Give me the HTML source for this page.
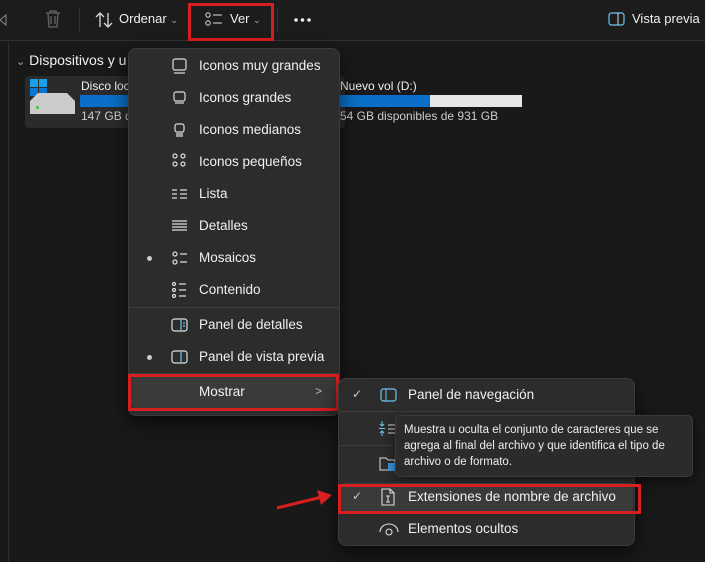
<!DOCTYPE html>
<html><head><meta charset="utf-8"><style>
*{margin:0;padding:0;box-sizing:border-box}
body{width:705px;height:562px;background:#191919;font-family:"Segoe UI","Liberation Sans",sans-serif;color:#fff;position:relative;overflow:hidden;font-size:13px}
.a{position:absolute}
.t{font-size:13.5px;color:#f0f0f0;white-space:nowrap}
.menu{background:#2c2c2c;border:1px solid #3a3a3a;border-radius:8px;box-shadow:0 8px 20px rgba(0,0,0,.6)}
.sep{height:1px;background:#3d3d3d}
.red{border:3px solid #d81e1e}
</style></head><body>
<div class="a" style="left:0;top:0;width:705px;height:41px;background:#1c1c1c;border-bottom:1px solid #333"></div>
<svg class="a" style="left:0;top:8px" width="18" height="22"><path d="M0 12l6-5v10z" stroke="#888" fill="none"/></svg>
<svg class="a" style="left:45px;top:10px" width="16" height="18"><path d="M1 3h14M5 3V1h6v2M3 3l1 14h8l1-14M6 6v8M10 6v8" stroke="#666" fill="none" stroke-width="1.3"/></svg>
<div class="a" style="left:79px;top:8px;width:1px;height:24px;background:#333"></div>
<svg class="a" style="left:95px;top:11px" width="18" height="18"><path d="M5 16V2M1 6l4-4 4 4M13 2v14M9 12l4 4 4-4" stroke="#ddd" fill="none" stroke-width="1.3"/></svg>
<div class="a t" style="left:119px;top:11px;font-size:13px">Ordenar <span style="font-size:9px;color:#aaa">&#8964;</span></div>
<svg class="a" style="left:205px;top:12px" width="18" height="16"><circle cx="3" cy="3" r="2.2" stroke="#ddd" fill="none"/><circle cx="3" cy="11" r="2.2" stroke="#ddd" fill="none"/><path d="M8 3h9M8 11h9" stroke="#ddd"/></svg>
<div class="a t" style="left:230px;top:11px;font-size:13px">Ver <span style="font-size:9px;color:#aaa">&#8964;</span></div>
<div class="a red" style="left:188px;top:3px;width:86px;height:38px"></div>
<div class="a" style="left:277px;top:8px;width:1px;height:24px;background:#333"></div>
<svg class="a" style="left:293px;top:17px" width="20" height="6"><circle cx="3" cy="3" r="1.8" fill="#eee"/><circle cx="9.5" cy="3" r="1.8" fill="#eee"/><circle cx="16" cy="3" r="1.8" fill="#eee"/></svg>
<svg class="a" style="left:608px;top:12px" width="17" height="14"><rect x="1" y="1" width="15" height="12" rx="2.5" stroke="#6cc4f0" fill="none" stroke-width="1.2"/><path d="M10 1v12" stroke="#ddd"/></svg>
<div class="a t" style="left:632px;top:11px;font-size:13px">Vista previa</div>
<div class="a" style="left:8px;top:42px;width:1px;height:520px;background:#2d2d2d"></div>
<div class="a t" style="left:16px;top:52px;font-size:14px"><span style="color:#aaa;font-size:11px">&#8964;</span> Dispositivos y u</div>
<div class="a" style="left:25px;top:76px;width:320px;height:52px;background:#2b2b2b;border-radius:4px"></div>
<svg class="a" style="left:30px;top:79px" width="18" height="18"><rect x="0" y="0" width="8" height="8" fill="#1a9ee8"/><rect x="9" y="0" width="8" height="8" fill="#1a9ee8"/><rect x="0" y="9" width="8" height="8" fill="#0a78d0"/><rect x="9" y="9" width="8" height="8" fill="#0a78d0"/></svg>
<div class="a" style="left:30px;top:93px;width:45px;height:21px;background:#ccc;clip-path:polygon(8px 0,37px 0,45px 8px,45px 21px,0 21px,0 8px)"></div>
<div class="a" style="left:36px;top:106px;width:3px;height:3px;background:#3c3;border-radius:50%"></div>
<div class="a t" style="left:81px;top:79px;font-size:12px">Disco loc</div>
<div class="a" style="left:80px;top:95px;width:60px;height:12px;background:#0a6fc8"></div>
<div class="a t" style="left:81px;top:109px;font-size:12px;color:#ccc">147 GB d</div>
<div class="a t" style="left:340px;top:79px;font-size:12px">Nuevo vol (D:)</div>
<div class="a" style="left:340px;top:95px;width:182px;height:12px;background:#e6e6e6"><div style="width:90px;height:12px;background:#0a6fc8"></div></div>
<div class="a t" style="left:340px;top:109px;font-size:12px;color:#ccc">54 GB disponibles de 931 GB</div>
<div class="a menu" style="left:128px;top:48px;width:212px;height:368px"></div>
<svg class="a" style="left:170px;top:56px" width="20" height="340" fill="none" stroke="#ddd" stroke-width="1.2">
<rect x="3" y="3" width="13" height="11" rx="2"/><path d="M4 17h11"/>
<rect x="4" y="36" width="11" height="9" rx="2"/><path d="M5 47h9"/>
<rect x="5" y="68" width="9" height="8" rx="2"/><path d="M6 78h7M6 80h7"/>
<circle cx="5" cy="100" r="2"/><circle cx="13" cy="100" r="2"/><circle cx="5" cy="108" r="2"/><circle cx="13" cy="108" r="2"/>
<path d="M2 134h5M2 138h5M2 142h5M10 134h7M10 138h7M10 142h7"/>
<path d="M2 165h15M2 168h15M2 171h15M2 174h15"/>
<circle cx="5" cy="198" r="2"/><circle cx="5" cy="206" r="2"/><path d="M10 198h7M10 206h7"/>
<circle cx="4" cy="228" r="1.5"/><circle cx="4" cy="234" r="1.5"/><circle cx="4" cy="240" r="1.5"/><path d="M9 228h7M9 234h7M9 240h7"/>
<rect x="2" y="263" width="15" height="12" rx="2.5"/><path d="M11 263v12M13 267h2M13 270h2" stroke="#6cc4f0"/>
<rect x="2" y="295" width="15" height="12" rx="2.5"/><path d="M11 295v12" stroke="#6cc4f0"/>
</svg>
<div class="a t" style="left:199px;top:58px">Iconos muy grandes</div>
<div class="a t" style="left:199px;top:90px">Iconos grandes</div>
<div class="a t" style="left:199px;top:122px">Iconos medianos</div>
<div class="a t" style="left:199px;top:154px">Iconos pequeños</div>
<div class="a t" style="left:199px;top:186px">Lista</div>
<div class="a t" style="left:199px;top:218px">Detalles</div>
<div class="a t" style="left:199px;top:250px">Mosaicos</div>
<div class="a t" style="left:199px;top:282px">Contenido</div>
<div class="a sep" style="left:129px;top:307px;width:210px"></div>
<div class="a t" style="left:199px;top:317px">Panel de detalles</div>
<div class="a t" style="left:199px;top:349px">Panel de vista previa</div>
<div class="a" style="left:147px;top:256px;width:5px;height:5px;border-radius:50%;background:#ccc"></div>
<div class="a" style="left:147px;top:355px;width:5px;height:5px;border-radius:50%;background:#ccc"></div>
<div class="a sep" style="left:129px;top:373px;width:210px"></div>
<div class="a" style="left:131px;top:377px;width:206px;height:31px;background:#3a3a3a;border-radius:4px"></div>
<div class="a t" style="left:199px;top:384px">Mostrar</div>
<div class="a t" style="left:315px;top:384px;color:#bbb;font-size:12px">&gt;</div>
<div class="a red" style="left:128px;top:374px;width:211px;height:37px"></div>
<div class="a menu" style="left:338px;top:378px;width:297px;height:168px"></div>
<div class="a t" style="left:352px;top:387px;font-size:12px;color:#ccc">&#10003;</div>
<svg class="a" style="left:380px;top:388px" width="18" height="14"><rect x="1" y="1" width="15" height="12" rx="2.5" stroke="#6cc4f0" fill="none" stroke-width="1.2"/><path d="M6 1v12" stroke="#6cc4f0"/></svg>
<div class="a t" style="left:408px;top:387px">Panel de navegación</div>
<div class="a sep" style="left:339px;top:411px;width:295px"></div>
<svg class="a" style="left:378px;top:420px" width="18" height="18" stroke="#ddd" fill="none"><path d="M4 1v5M2 4l2 2 2-2M4 16v-5M2 13l2-2 2 2M1 8.5h6" stroke="#6cc4f0"/><path d="M10 5h7M10 9h7M10 13h7"/></svg>
<div class="a sep" style="left:339px;top:445px;width:295px"></div>
<svg class="a" style="left:379px;top:455px" width="18" height="18" fill="none"><path d="M1 3h6l2 2h7v10H1z" stroke="#ddd"/><rect x="9" y="8" width="8" height="8" fill="#3a96dd"/></svg>
<div class="a" style="left:395px;top:415px;width:298px;height:62px;background:#2b2b2b;border:1px solid #3a3a3a;border-radius:5px;box-shadow:0 4px 12px rgba(0,0,0,.5)"></div>
<div class="a" style="left:404px;top:422px;font-size:11.5px;line-height:16px;color:#eee;width:288px">Muestra u oculta el conjunto de caracteres que se agrega al final del archivo y que identifica el tipo de archivo o de formato.</div>
<div class="a" style="left:341px;top:483px;width:292px;height:28px;background:#3a3a3a;border-radius:4px"></div>
<div class="a t" style="left:352px;top:489px;font-size:12px;color:#ccc">&#10003;</div>
<svg class="a" style="left:381px;top:488px" width="14" height="18" fill="none" stroke="#ddd" stroke-width="1.1"><path d="M1 1h8l4 4v12H1zM9 1v4h4M5 8h4M7 8v6M5 14h4"/></svg>
<div class="a t" style="left:408px;top:489px">Extensiones de nombre de archivo</div>
<div class="a red" style="left:338px;top:484px;width:303px;height:30px"></div>
<svg class="a" style="left:379px;top:522px" width="20" height="14" fill="none" stroke="#ddd" stroke-width="1.1"><path d="M1 10a9 8 0 0 1 18 0"/><circle cx="10" cy="10" r="3"/></svg>
<div class="a t" style="left:408px;top:521px">Elementos ocultos</div>
<svg class="a" style="left:270px;top:485px" width="70" height="30"><path d="M7 23L52 12" stroke="#d81e1e" stroke-width="3"/><path d="M62 10L47 5l4 15z" fill="#d81e1e"/></svg>
</body></html>
